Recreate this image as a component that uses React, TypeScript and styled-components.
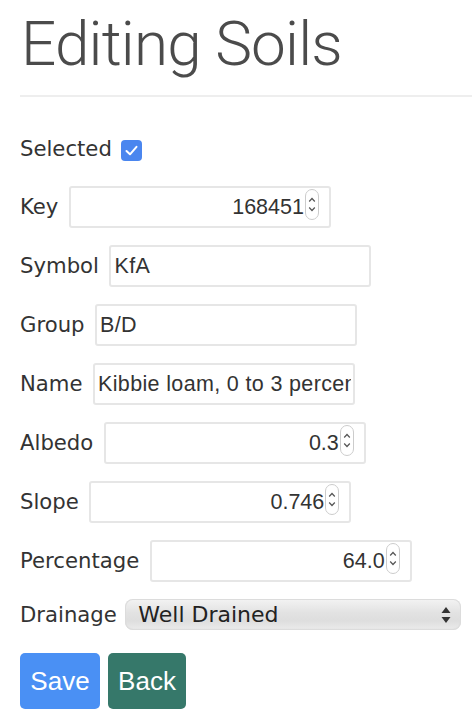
import React from "react";
import styled, { createGlobalStyle } from "styled-components";

const Global = createGlobalStyle`
  html, body { margin: 0; padding: 0; background: #fff; }
  body { font-family: "DejaVu Sans", Verdana, sans-serif; color: #333; }
`;

const Page = styled.div`
  padding: 13px 0 0 20px;
`;

const Title = styled.h1`
  margin: 0 0 0 1px;
  font-family: Roboto, "Liberation Sans", Arial, sans-serif;
  font-weight: 300;
  font-size: 62px;
  line-height: 62px;
  letter-spacing: -0.8px;
  color: #4b4b4b;
`;

const Rule = styled.hr`
  margin: 20px 0 0 0;
  border: none;
  border-top: 2px solid #eeeeee;
  height: 0;
`;

const Form = styled.form`
  display: flex;
  flex-direction: column;
  padding-top: 41px;
`;

const Row = styled.div<{ $top?: number; $h?: number }>`
  display: flex;
  align-items: center;
  gap: 10.5px;
  height: ${(p) => p.$h ?? 42}px;
  margin-top: ${(p) => p.$top ?? 17}px;
`;

const Label = styled.label`
  font-family: "DejaVu Sans", Verdana, sans-serif;
  font-size: 21.2px;
  color: #333;
  line-height: 1;
  white-space: nowrap;
`;

const Check = styled.span`
  width: 21px;
  height: 21px;
  border-radius: 4px;
  background: #4a86ef;
  display: flex;
  align-items: center;
  justify-content: center;
  margin-left: -1px;
  margin-top: 2px;
`;

const Box = styled.div`
  box-sizing: border-box;
  width: 262px;
  height: 42px;
  border: 2px solid #e6e6e6;
  border-radius: 3px;
  display: flex;
  align-items: center;
  background: #fff;
`;

const NumBox = styled(Box)`
  padding: 0 10px 0 4px;
  gap: 1px;
`;

const TextBox = styled(Box)`
  padding: 0 2px 0 3px;
`;

const Field = styled.input<{ $align?: string; $ls?: number }>`
  flex: 1;
  min-width: 0;
  border: none;
  outline: none;
  padding: 0;
  margin: 0;
  background: transparent;
  font-family: "Liberation Sans", Arial, sans-serif;
  font-size: 21.5px;
  letter-spacing: ${(p) => p.$ls ?? 0}px;
  color: #333;
  text-align: ${(p) => p.$align ?? "left"};
`;

const SelectWrap = styled.div`
  box-sizing: border-box;
  width: 336px;
  height: 31px;
  border-radius: 8px;
  background: linear-gradient(#f3f3f3 0%, #e2e2e2 45%, #dedede 70%, #ececec 100%);
  box-shadow: inset 0 0 0 1px #dcdcdc, inset 0 -1px 2px rgba(0,0,0,0.05);
  display: flex;
  align-items: center;
  padding: 0 10px 0 13px;
  margin-left: -2px;
`;

const Select = styled.select`
  flex: 1;
  appearance: none;
  -webkit-appearance: none;
  border: none;
  outline: none;
  background: transparent;
  font-family: "DejaVu Sans", Verdana, sans-serif;
  font-size: 22px;
  color: #222;
  padding: 0;
  margin: 0;
`;

const Buttons = styled.div`
  display: flex;
  gap: 8px;
  margin-top: 23px;
`;

const Btn = styled.button<{ $bg: string; $w: number }>`
  width: ${(p) => p.$w}px;
  height: 56px;
  border: none;
  border-radius: 5px;
  background: ${(p) => p.$bg};
  color: #fff;
  font-family: "Liberation Sans", Arial, sans-serif;
  font-size: 26px;
  padding: 0;
  cursor: pointer;
`;

const Spinner = () => (
  <svg width="14" height="31" viewBox="0 0 14 31" style={{ marginTop: -6 }}>
    <rect x="0.5" y="0.5" width="13" height="30" rx="6.5" fill="#fff" stroke="#cccccc" />
    <path d="M4.2 12.5 L7 9.5 L9.8 12.5" fill="none" stroke="#555" strokeWidth="1.2" />
    <path d="M4.2 18.5 L7 21.5 L9.8 18.5" fill="none" stroke="#555" strokeWidth="1.2" />
  </svg>
);

const SelectArrows = () => (
  <svg width="10" height="18" viewBox="0 0 10 18">
    <path d="M5 1 L9.5 7 L0.5 7 Z" fill="#333" />
    <path d="M5 17 L9.5 11 L0.5 11 Z" fill="#333" />
  </svg>
);

const NumberField = ({ value }: { value: string }) => (
  <NumBox>
    <Field $align="right" value={value} readOnly />
    <Spinner />
  </NumBox>
);

const TextField = ({ value }: { value: string }) => (
  <TextBox>
    <Field $ls={0.35} value={value} readOnly />
  </TextBox>
);

export default function App() {
  return (
    <>
      <Global />
      <Page>
        <Title>Editing Soils</Title>
        <Rule />
        <Form onSubmit={(e) => e.preventDefault()}>
          <Row $top={0} $h={22}>
            <Label>Selected</Label>
            <Check>
              <svg width="13" height="11" viewBox="0 0 13 11">
                <path d="M1.5 6 L5 9.3 L11.5 1.8" fill="none" stroke="#fff" strokeWidth="2" strokeLinecap="round" strokeLinejoin="round" />
              </svg>
            </Check>
          </Row>
          <Row $top={26}>
            <Label>Key</Label>
            <NumberField value="168451" />
          </Row>
          <Row>
            <Label>Symbol</Label>
            <TextField value="KfA" />
          </Row>
          <Row>
            <Label>Group</Label>
            <TextField value="B/D" />
          </Row>
          <Row>
            <Label>Name</Label>
            <TextField value="Kibbie loam, 0 to 3 percent slopes" />
          </Row>
          <Row>
            <Label>Albedo</Label>
            <NumberField value="0.3" />
          </Row>
          <Row>
            <Label>Slope</Label>
            <NumberField value="0.746" />
          </Row>
          <Row>
            <Label>Percentage</Label>
            <NumberField value="64.0" />
          </Row>
          <Row $h={31}>
            <Label>Drainage</Label>
            <SelectWrap>
              <Select defaultValue="well">
                <option value="well">Well Drained</option>
                <option value="moderate">Moderately Well Drained</option>
                <option value="poor">Poorly Drained</option>
              </Select>
              <SelectArrows />
            </SelectWrap>
          </Row>
          <Buttons>
            <Btn type="submit" $bg="#4a90f4" $w={80}>Save</Btn>
            <Btn type="button" $bg="#36786a" $w={78}>Back</Btn>
          </Buttons>
        </Form>
      </Page>
    </>
  );
}
